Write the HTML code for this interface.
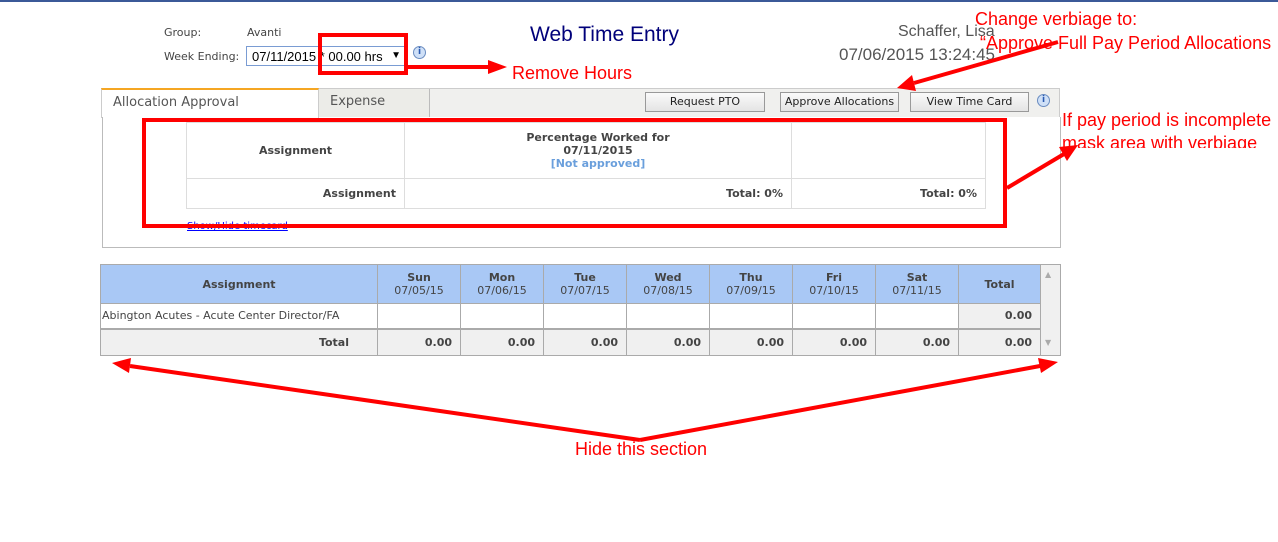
<!DOCTYPE html>
<html><head><meta charset="utf-8"><style>
*{margin:0;padding:0;box-sizing:border-box}
body{width:1278px;height:542px;background:#fff;position:relative;overflow:hidden;font-family:"DejaVu Sans",Verdana,sans-serif;font-size:11px;color:#444}
.a{position:absolute;white-space:nowrap}
.ann{position:absolute;white-space:nowrap;font-family:"Liberation Sans",sans-serif;color:#f00;font-size:18px}
.btn{position:absolute;top:92px;height:20px;border:1px solid #999;background:linear-gradient(#fafafa,#e4e4e4);font-size:11px;text-align:center;line-height:18px;color:#222}
table{border-collapse:collapse;position:absolute}
td{font-size:11px}
.t1 td{border:1px solid #ddd;font-weight:bold;color:#444}
.t2 td{border:1px solid #aaa;font-weight:bold;color:#444;text-align:center}
</style></head><body>
<div class="a" style="left:0;top:0;width:1278px;height:2px;background:#3b5998"></div>
<div class="a" style="left:164px;top:26px;font-size:11px">Group:</div>
<div class="a" style="left:247px;top:26px;font-size:11px">Avanti</div>
<div class="a" style="left:164px;top:50px;font-size:11px">Week Ending:</div>
<div class="a" style="left:246px;top:46px;width:161px;height:20px;border:1px solid #7a9cd3;font-family:'Liberation Sans',sans-serif;font-size:13px;color:#000;padding:2px 0 0 5px">07/11/2015 * 00.00 hrs<span style="position:absolute;right:5px;top:3px;font-size:10px">▼</span></div>
<div class="a" style="left:413px;top:46px;width:13px;height:13px;border-radius:50%;background:#cfe0f7;border:1px solid #6a8cc0;color:#2a5ab0;font-size:9px;font-weight:bold;text-align:center;line-height:11px">i</div>
<div class="a" style="left:530px;top:23px;font-family:'Liberation Sans',sans-serif;font-size:21px;color:#00007a">Web Time Entry</div>
<div class="a" style="left:898px;top:23px;font-family:'Liberation Sans',sans-serif;font-size:16px;color:#555">Schaffer, Lisa</div>
<div class="a" style="left:839px;top:45px;font-family:'Liberation Sans',sans-serif;font-size:17px;color:#555">07/06/2015 13:24:45</div>

<!-- tabs -->
<div class="a" style="left:101px;top:88px;width:959px;height:29px;background:#f0f0ee;border:1px solid #ccc;border-bottom:none"></div>
<div class="a" style="left:101px;top:88px;width:218px;height:30px;background:#fff;border-top:2px solid #f5a623;border-left:1px solid #ccc;border-right:1px solid #ccc;font-size:13px;color:#555;padding:5px 0 0 11px">Allocation Approval</div>
<div class="a" style="left:319px;top:89px;width:111px;height:28px;background:#ecece8;border-right:1px solid #bbb;font-size:13px;color:#555;padding:5px 0 0 11px">Expense</div>
<div class="btn" style="left:645px;width:120px">Request PTO</div>
<div class="btn" style="left:780px;width:119px">Approve Allocations</div>
<div class="btn" style="left:910px;width:119px">View Time Card</div>
<div class="a" style="left:1037px;top:94px;width:13px;height:13px;border-radius:50%;background:#cfe0f7;border:1px solid #6a8cc0;color:#2a5ab0;font-size:9px;font-weight:bold;text-align:center;line-height:11px">i</div>
<div class="a" style="left:102px;top:117px;width:959px;height:131px;border:1px solid #bbb;border-top:none"></div>

<table class="t1" style="left:186px;top:122px;width:800px">
<tr style="height:56px"><td style="width:218px;text-align:center">Assignment</td><td style="width:387px;text-align:center;line-height:13px">Percentage Worked for<br>07/11/2015<br><span style="color:#6a9fdc">[Not approved]</span></td><td></td></tr>
<tr style="height:30px"><td style="text-align:right;padding-right:8px">Assignment</td><td style="text-align:right;padding-right:8px">Total: 0%</td><td style="text-align:right;padding-right:8px">Total: 0%</td></tr>
</table>
<div class="a" style="left:187px;top:221px;font-size:10px;color:#00f;text-decoration:underline">Show/Hide timecard</div>

<!-- bottom table -->
<div class="a" style="left:100px;top:264px;width:961px;height:92px;border:1px solid #aaa;background:#f0f0f0"></div>
<table class="t2" style="left:100px;top:264px;width:941px">
<tr style="height:39px;background:#a9c8f5"><td style="width:277px">Assignment</td>
<td style="width:83px">Sun<br><span style="font-weight:normal">07/05/15</span></td>
<td style="width:83px">Mon<br><span style="font-weight:normal">07/06/15</span></td>
<td style="width:83px">Tue<br><span style="font-weight:normal">07/07/15</span></td>
<td style="width:83px">Wed<br><span style="font-weight:normal">07/08/15</span></td>
<td style="width:83px">Thu<br><span style="font-weight:normal">07/09/15</span></td>
<td style="width:83px">Fri<br><span style="font-weight:normal">07/10/15</span></td>
<td style="width:83px">Sat<br><span style="font-weight:normal">07/11/15</span></td>
<td>Total</td></tr>
<tr style="height:25px;background:#fff"><td style="text-align:left;font-weight:normal;padding-left:1px">Abington Acutes - Acute Center Director/FA</td><td></td><td></td><td></td><td></td><td></td><td></td><td></td><td style="background:#f0f0f0;text-align:right;padding-right:8px">0.00</td></tr>
<tr style="height:27px;background:#f0f0f0;border-top:2px solid #aaa"><td style="text-align:right;padding-right:28px">Total</td><td style="text-align:right;padding-right:8px">0.00</td><td style="text-align:right;padding-right:8px">0.00</td><td style="text-align:right;padding-right:8px">0.00</td><td style="text-align:right;padding-right:8px">0.00</td><td style="text-align:right;padding-right:8px">0.00</td><td style="text-align:right;padding-right:8px">0.00</td><td style="text-align:right;padding-right:8px">0.00</td><td style="text-align:right;padding-right:8px">0.00</td></tr>
</table>
<div class="a" style="left:1045px;top:270px;font-size:8px;color:#aaa">▲</div>
<div class="a" style="left:1045px;top:338px;font-size:8px;color:#aaa">▼</div>

<!-- annotations -->
<div class="ann" style="left:512px;top:63px">Remove Hours</div>
<div class="ann" style="left:975px;top:9px">Change verbiage to:</div>
<div class="ann" style="left:980px;top:33px">“Approve Full Pay Period Allocations</div>
<div class="ann" style="left:1062px;top:110px">If pay period is incomplete</div>
<div class="a" style="left:1062px;top:133px;height:15px;overflow:hidden"><div class="ann" style="position:static">mask area with verbiage</div></div>
<div class="ann" style="left:575px;top:439px">Hide this section</div>

<svg class="a" style="left:0;top:0" width="1278" height="542">
<rect x="320" y="35" width="86" height="38" fill="none" stroke="#f00" stroke-width="4"/>
<rect x="144" y="120" width="861" height="106" fill="none" stroke="#f00" stroke-width="4"/>
<g stroke="#f00" stroke-width="4" fill="#f00">
<line x1="408" y1="67" x2="490" y2="67"/><polygon points="507,67 488,60 488,74" stroke="none"/>
<line x1="1058" y1="42" x2="914" y2="83"/><polygon points="897,88 912,75 916,91" stroke="none"/>
<line x1="1007" y1="188" x2="1064" y2="154"/><polygon points="1078,145 1059,147 1067,161" stroke="none"/>
<line x1="640" y1="440" x2="130" y2="366"/><polygon points="112,363 131,358 129,373" stroke="none"/>
<line x1="640" y1="440" x2="1040" y2="366"/><polygon points="1058,362 1038,358 1041,373" stroke="none"/>
</g>
</svg>
</body></html>
